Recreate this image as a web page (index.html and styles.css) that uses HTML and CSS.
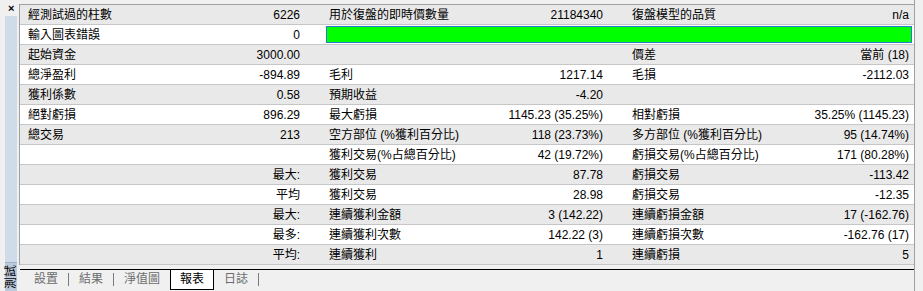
FILE: index.html
```html
<!DOCTYPE html>
<html lang="zh-Hant">
<head>
    <meta charset="utf-8">
    <title>測試 | 報表</title>
    <link rel="stylesheet" href="styles.css">
</head>
<body>

    <div class="window">

        <aside class="side">
            <span class="close">×</span>
            <div class="stripe">
                <div class="side-label"><span>測試</span></div>
            </div>
        </aside>

        <div class="panel">

            <div class="report">
                <div class="row">
                    <div class="k">經測試過的柱數</div><div class="v">6226</div>
                    <div class="k">用於復盤的即時價數量</div><div class="v">21184340</div>
                    <div class="k">復盤模型的品質</div><div class="v">n/a</div>
                </div>
                <div class="row">
                    <div class="k">輸入圖表錯誤</div><div class="v">0</div>
                    <div class="bar"></div>
                </div>
                <div class="row">
                    <div class="k">起始資金</div><div class="v">3000.00</div>
                    <div class="k"></div><div class="v"></div>
                    <div class="k">價差</div><div class="v">當前 (18)</div>
                </div>
                <div class="row">
                    <div class="k">總淨盈利</div><div class="v">-894.89</div>
                    <div class="k">毛利</div><div class="v">1217.14</div>
                    <div class="k">毛損</div><div class="v">-2112.03</div>
                </div>
                <div class="row">
                    <div class="k">獲利係數</div><div class="v">0.58</div>
                    <div class="k">預期收益</div><div class="v">-4.20</div>
                    <div class="k"></div><div class="v"></div>
                </div>
                <div class="row">
                    <div class="k">絕對虧損</div><div class="v">896.29</div>
                    <div class="k">最大虧損</div><div class="v">1145.23 (35.25%)</div>
                    <div class="k">相對虧損</div><div class="v">35.25% (1145.23)</div>
                </div>
                <div class="row">
                    <div class="k">總交易</div><div class="v">213</div>
                    <div class="k">空方部位 (%獲利百分比)</div><div class="v">118 (23.73%)</div>
                    <div class="k">多方部位 (%獲利百分比)</div><div class="v">95 (14.74%)</div>
                </div>
                <div class="row">
                    <div class="k"></div><div class="v"></div>
                    <div class="k">獲利交易(%占總百分比)</div><div class="v">42 (19.72%)</div>
                    <div class="k">虧損交易(%占總百分比)</div><div class="v">171 (80.28%)</div>
                </div>
                <div class="row">
                    <div class="k"></div><div class="v">最大:</div>
                    <div class="k">獲利交易</div><div class="v">87.78</div>
                    <div class="k">虧損交易</div><div class="v">-113.42</div>
                </div>
                <div class="row">
                    <div class="k"></div><div class="v">平均</div>
                    <div class="k">獲利交易</div><div class="v">28.98</div>
                    <div class="k">虧損交易</div><div class="v">-12.35</div>
                </div>
                <div class="row">
                    <div class="k"></div><div class="v">最大:</div>
                    <div class="k">連續獲利金額</div><div class="v">3 (142.22)</div>
                    <div class="k">連續虧損金額</div><div class="v">17 (-162.76)</div>
                </div>
                <div class="row">
                    <div class="k"></div><div class="v">最多:</div>
                    <div class="k">連續獲利次數</div><div class="v">142.22 (3)</div>
                    <div class="k">連續虧損次數</div><div class="v">-162.76 (17)</div>
                </div>
                <div class="row">
                    <div class="k"></div><div class="v">平均:</div>
                    <div class="k">連續獲利</div><div class="v">1</div>
                    <div class="k">連續虧損</div><div class="v">5</div>
                </div>
            </div>

            <div class="tabs">
                <span class="tab">設置</span>
                <span class="sep"></span>
                <span class="tab">結果</span>
                <span class="sep"></span>
                <span class="tab">淨值圖</span>
                <span class="tab active">報表</span>
                <span class="tab">日誌</span>
                <span class="sep"></span>
            </div>

        </div>

    </div>

</body>
</html>
```

FILE: styles.css
```css
html,
body {
    margin: 0;
    height: 100%;
}

body {
    background-color: #f0f0f0;
    color: #000;
    font-family: "Liberation Sans", "Noto Sans CJK TC", sans-serif;
    font-size: 12px;
}

.window {
    display: flex;
    height: 291px;
}

/* 左側工具列 */
.side {
    width: 19px;
    display: flex;
    flex-direction: column;
}
.side .close {
    height: 16px;
    padding-left: 8px;
    font-size: 11px;
    font-weight: bold;
    line-height: 16px;
}
.side .stripe {
    flex: 1;
    margin: 0 2px 0 5px;
    background-color: #cfdbe8;

    display: flex;
    flex-direction: column;
    justify-content: flex-end;
}
.side .side-label {
    height: 28px;
    border-top: solid 1px #9fb1c6;
    background-color: #bccbdc;
}
/* 文字由下往上 */
.side .side-label span {
    display: block;
    width: 28px;
    height: 12px;
    font-size: 12px;
    line-height: 12px;
    text-align: center;
    white-space: nowrap;
    transform-origin: top left;
    transform: translateY(28px) rotate(-90deg);
}

.panel {
    flex: 1;
    display: flex;
    flex-direction: column;
    padding-top: 4px;
    margin-right: 8px;
    border-right: solid 1px #a0a0a0;
}

.report {
    border-top: solid 1px #a0a0a0;
    border-left: solid 1px #a0a0a0;
}

.row {
    display: grid;
    grid-template-columns: 150px 151px 150px 153px 150px 140px;
    height: 20px;
    box-sizing: border-box;
    border-bottom: solid 1px #c6c6c6;
    line-height: 19px;
    white-space: nowrap;
}
.row:nth-child(odd) {
    background-color: #e9e9e9;
}
.row:nth-child(even) {
    background-color: #fff;
}

.row .k {
    padding: 1px 0 0 8px;
}
.row .v {
    padding: 1px 21px 0 0;
    text-align: right;
}
.row .v:last-child {
    padding-right: 5px;
}

.row .bar {
    grid-column: 3 / 7;
    height: 17px;
    margin: 1px 2px 1px 5px;
    box-sizing: border-box;
    border: solid 1px #2a7bd0;
    background-color: #00ff00;
}

/* 下方分頁 */
.tabs {
    flex: 1;
    display: flex;
    align-items: flex-start;
    margin: 4px 0 0 1px;
    padding-left: 4px;
    border-top: solid 1px #000;
    line-height: 19px;
}
.tabs .tab {
    padding: 0 10px;
    color: #6d6d6d;
}
.tabs .tab.active {
    margin-top: -1px;
    height: 19px;
    padding: 0 9px;
    border: solid 1px #000;
    background-color: #fff;
    color: #000;
}
.tabs .sep {
    width: 1px;
    height: 13px;
    margin-top: 3px;
    background-color: #7a7a7a;
}
```
